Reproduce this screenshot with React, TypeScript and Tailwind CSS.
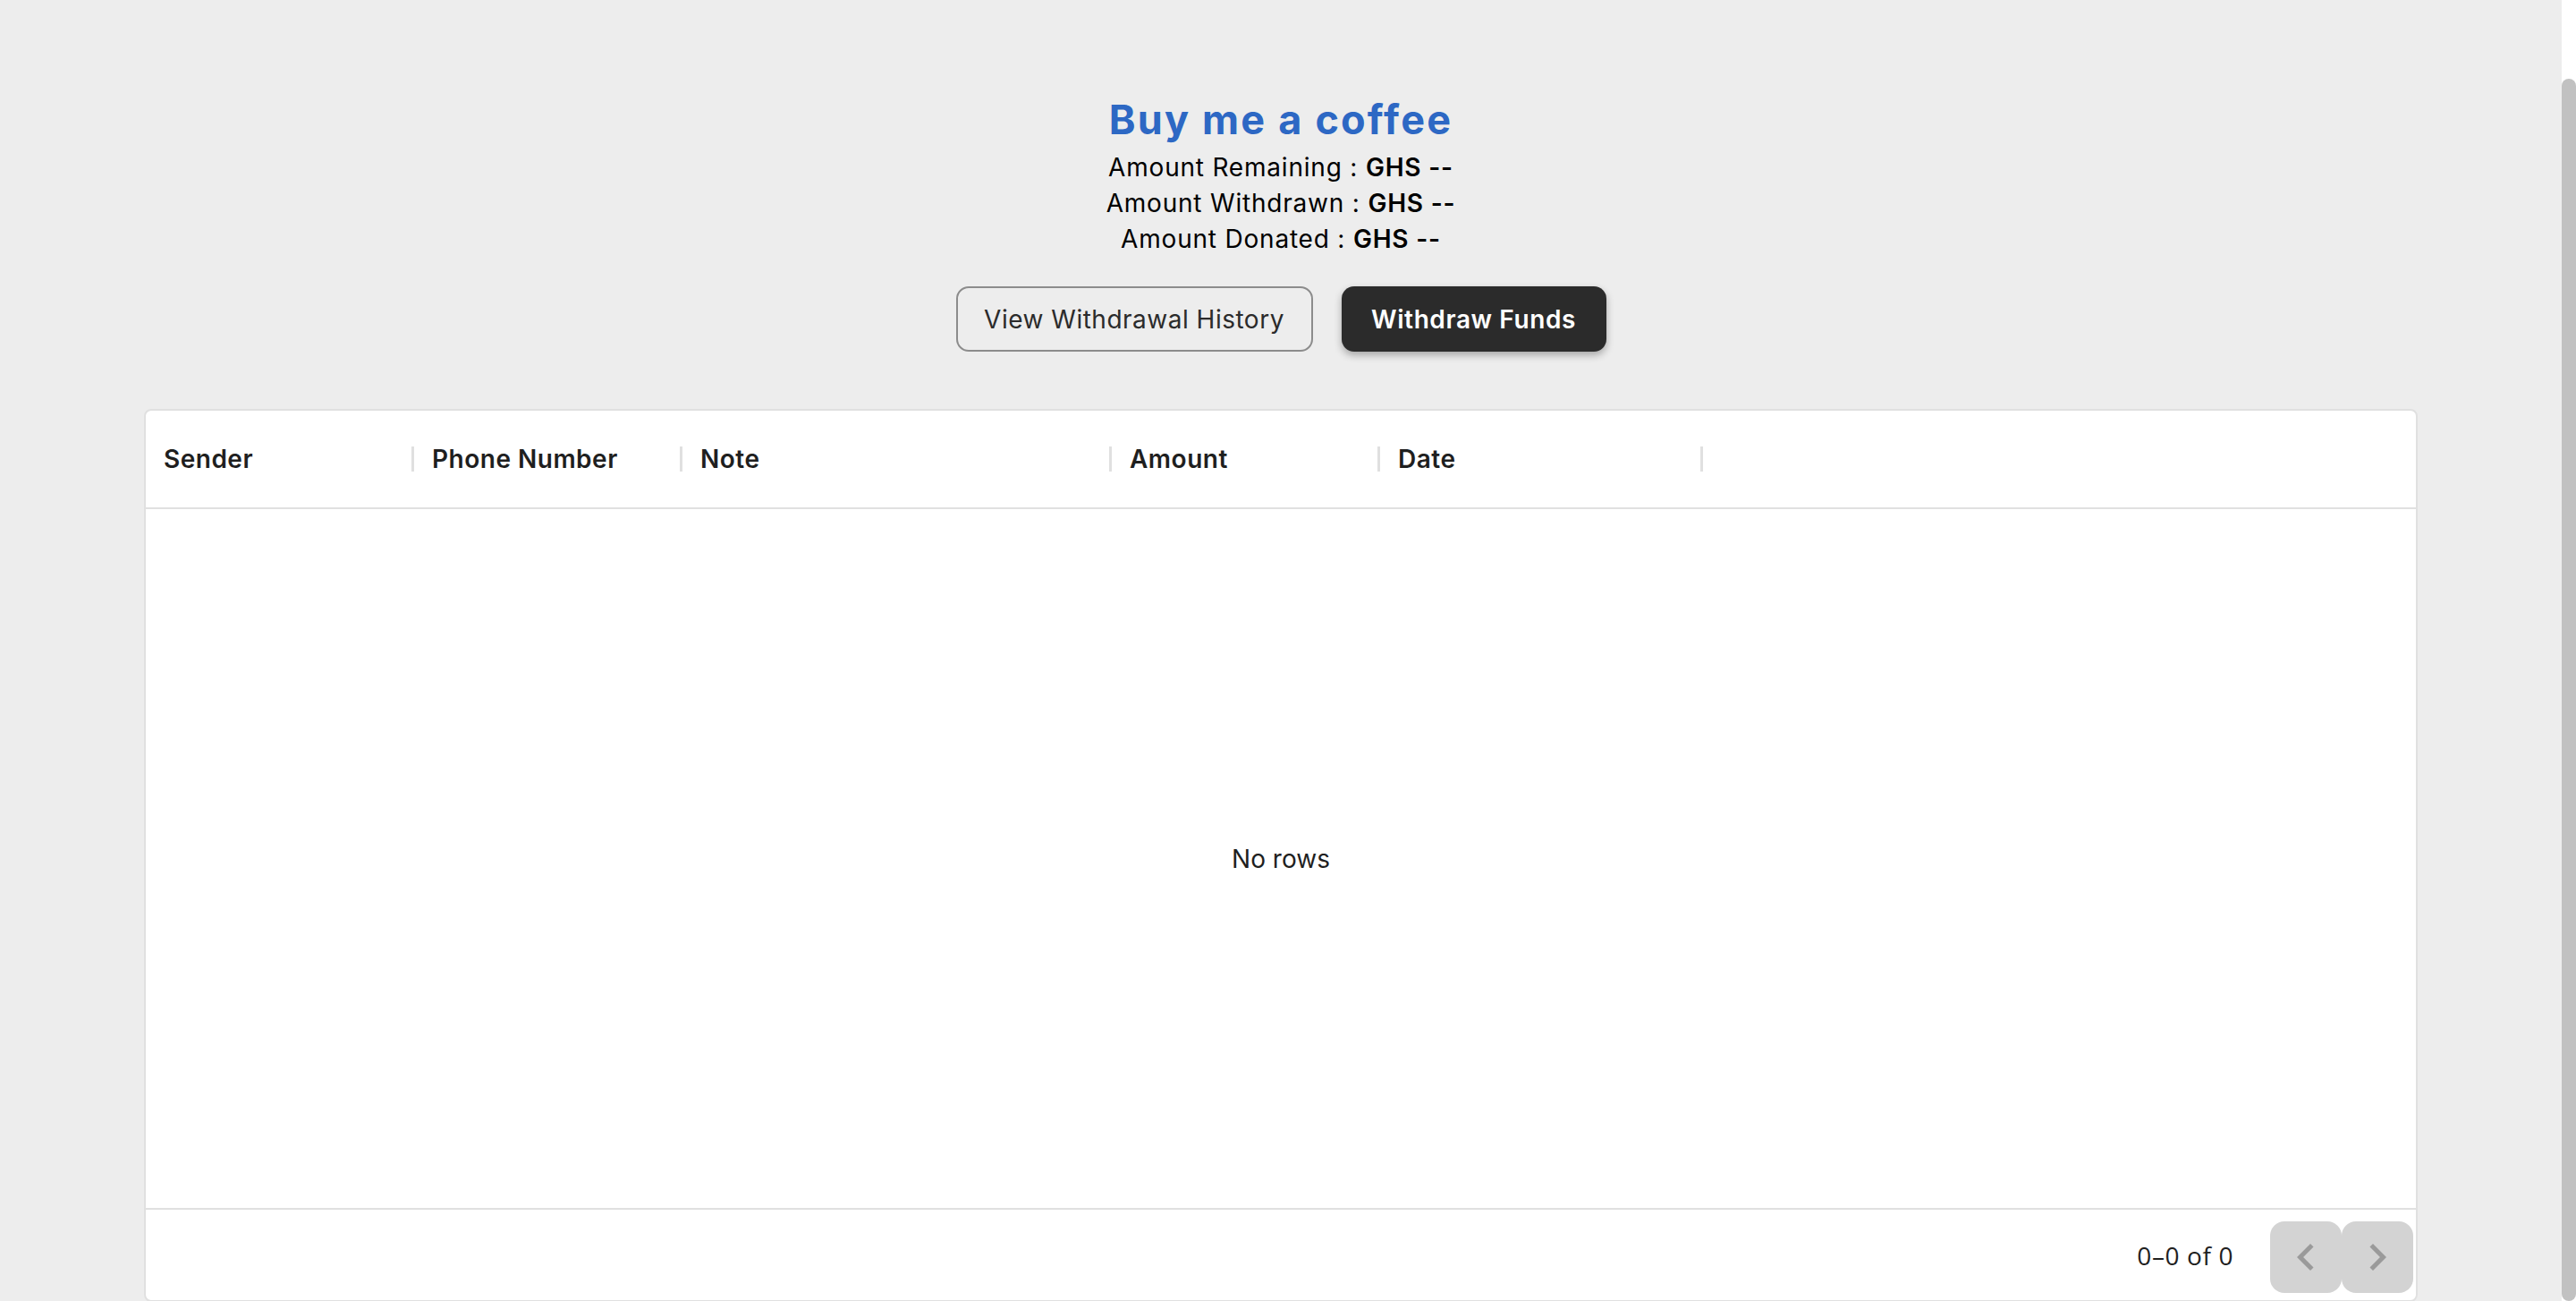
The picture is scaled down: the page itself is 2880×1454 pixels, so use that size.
import { ReactNode } from 'react'

const font = { fontFamily: 'Inter, "Noto Sans", sans-serif' }

const columns = [
  { title: 'Sender', width: 'w-[300px]' },
  { title: 'Phone Number', width: 'w-[300px]' },
  { title: 'Note', width: 'w-[480px]' },
  { title: 'Amount', width: 'w-[300px]' },
  { title: 'Date', width: 'w-[361px]' },
]

const Stat = ({ label, value }: { label: string; value: ReactNode }) => (
  <p className="text-[28px] leading-[40px] tracking-[0.8px] text-black">
    {label} : <span className="font-semibold">{value}</span>
  </p>
)

const PageButton = ({ dir }: { dir: 'prev' | 'next' }) => (
  <button
    disabled
    className="flex h-[80px] w-[80px] items-center justify-center rounded-[16px] bg-[#d3d3d3]"
  >
    <svg width="60" height="60" viewBox="0 0 24 24" fill="#9a9a9a">
      {dir === 'prev' ? (
        <path d="M15.41 7.41 14 6l-6 6 6 6 1.41-1.41L10.83 12z" />
      ) : (
        <path d="M10 6 8.59 7.41 13.17 12l-4.58 4.59L10 18l6-6z" />
      )}
    </svg>
  </button>
)

const App = () => {
  return (
    <div className="flex h-[1454px] overflow-hidden bg-[#ededed]" style={font}>
      <div className="flex flex-1 flex-col items-center px-[161px] pt-[110px]">
        <h1 className="text-[45px] font-bold leading-[48px] tracking-[2.2px] text-[#2d68c4]">
          Buy me a coffee
        </h1>
        <div className="mt-[9px] flex flex-col items-center">
          <Stat label="Amount Remaining" value="GHS --" />
          <Stat label="Amount Withdrawn" value="GHS --" />
          <Stat label="Amount Donated" value="GHS --" />
        </div>

        <div className="mt-[33px] flex gap-[32px]">
          <button className="h-[73px] w-[399px] rounded-[14px] border-2 border-[#8c8c8c] text-[28px] tracking-[0.5px] text-[#2b2b2b]">
            View Withdrawal History
          </button>
          <button className="h-[73px] w-[296px] rounded-[14px] bg-[#2b2b2b] text-[28px] font-semibold tracking-[0.6px] text-white shadow-[0_4px_8px_rgba(0,0,0,0.3)]">
            Withdraw Funds
          </button>
        </div>

        <div className="mt-[64px] flex h-[998px] w-full shrink-0 flex-col rounded-[8px] border-2 border-[#e0e0e0] bg-white">
          <div className="flex h-[110px] shrink-0 items-center border-b-2 border-[#e0e0e0]">
            {columns.map((col) => (
              <div key={col.title} className={`flex h-full items-center justify-between ${col.width}`}>
                <span className="pl-[20px] text-[28px] font-semibold tracking-[0.5px] text-[#1f1f1f]">
                  {col.title}
                </span>
                <span className="h-[28px] w-[3px] bg-[#e0e0e0]" />
              </div>
            ))}
          </div>

          <div className="flex flex-1 items-center justify-center">
            <span className="text-[28px] text-[#1f1f1f]">No rows</span>
          </div>

          <div className="flex h-[103px] shrink-0 items-center justify-end gap-[41px] border-t-2 border-[#e0e0e0] pr-[3px]">
            <span className="text-[28px] tracking-[0.6px] text-[#1f1f1f]" style={{ fontFamily: '"Open Sans", sans-serif' }}>
              0–0 of 0
            </span>
            <div className="mt-[4px] flex">
              <PageButton dir="prev" />
              <PageButton dir="next" />
            </div>
          </div>
        </div>
      </div>

      <div className="flex h-full w-[16px] shrink-0 flex-col bg-white pt-[88px]">
        <div className="flex-1 rounded-full bg-[#c1c1c1]" />
      </div>
    </div>
  )
}

export default App
